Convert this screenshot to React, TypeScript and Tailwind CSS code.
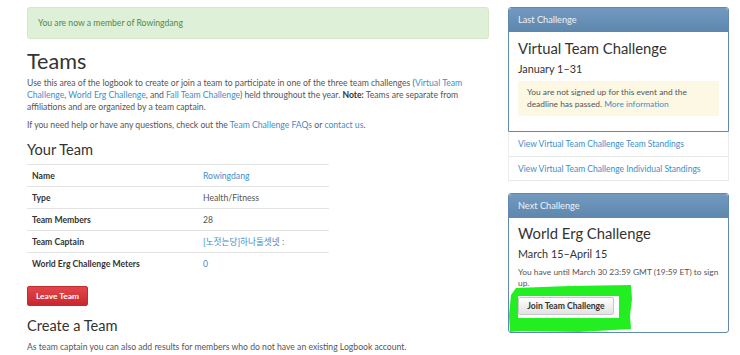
import React from 'react';

const font = { fontFamily: 'Lato, "Noto Sans CJK KR", sans-serif' };

function TeamRow({ label, children }: { label: string; children: React.ReactNode }) {
  return (
    <tr className="border-t border-[#e3e3e3]">
      <td className="h-[22px] w-[176px] pl-[5px] font-bold text-[#333]">{label}</td>
      <td className="h-[22px] pl-0">{children}</td>
    </tr>
  );
}

function PanelHeader({ title }: { title: string }) {
  return (
    <div className="h-[24px] flex items-center px-[9px] text-[9.2px] text-[#eef3f8] bg-gradient-to-b from-[#7399bf] to-[#5e87ae] rounded-t-[3px]">
      {title}
    </div>
  );
}

export default function App() {
  return (
    <div style={font} className="w-[740px] h-[355px] overflow-hidden bg-white text-[8.4px] leading-[12px] text-[#555]">
      <div className="flex pl-[27px] pt-[7px] gap-[19px]">
        {/* main column */}
        <div className="w-[462px] text-[8.65px]">
          <div className="h-[32px] flex items-center px-[10px] bg-[#dff0d8] border border-[#d3e8c6] rounded-[3px] text-[#4f8a4a]">
            You are now a member of Rowingdang
          </div>

          <h1 className="mt-[10px] text-[21.6px] leading-[24px] text-[#333] font-normal">Teams</h1>
          <p className="mt-[4px]">
            Use this area of the logbook to create or join a team to participate in one of the three team challenges (
            <a className="text-[#3d8ec9]">Virtual Team</a> <a className="text-[#3d8ec9]">Challenge</a>,{' '}
            <a className="text-[#3d8ec9]">World Erg Challenge</a>, and <a className="text-[#3d8ec9]">Fall Team Challenge</a>) held
            throughout the year. <b className="text-[#333]">Note:</b> Teams are separate from
            <br />
            affiliations and are organized by a team captain.
          </p>
          <p className="mt-[6px]">
            If you need help or have any questions, check out the <a className="text-[#3d8ec9]">Team Challenge FAQs</a> or{' '}
            <a className="text-[#3d8ec9]">contact us</a>.
          </p>

          <h3 className="mt-[11px] text-[14.6px] leading-[16px] text-[#333] font-normal">Your Team</h3>
          <table className="mt-[6px] w-[302px] border-collapse">
            <tbody>
              <TeamRow label="Name">
                <a className="text-[#3d8ec9]">Rowingdang</a>
              </TeamRow>
              <TeamRow label="Type">Health/Fitness</TeamRow>
              <TeamRow label="Team Members">28</TeamRow>
              <TeamRow label="Team Captain">
                <a className="text-[#3d8ec9]">[노젓는당]하나둘셋넷 :</a>
              </TeamRow>
              <TeamRow label="World Erg Challenge Meters">
                <a className="text-[#3d8ec9]">0</a>
              </TeamRow>
            </tbody>
          </table>

          <button className="mt-[11px] block h-[20px] w-[61px] rounded-[2px] border border-[#c42c2c] bg-gradient-to-b from-[#e2464c] to-[#c9262d] text-[8.4px] font-bold text-white">
            Leave Team
          </button>

          <h3 className="mt-[12px] text-[14.6px] leading-[16px] text-[#333] font-normal">Create a Team</h3>
          <p className="mt-[7px]">As team captain you can also add results for members who do not have an existing Logbook account.</p>
        </div>

        {/* sidebar */}
        <div className="w-[221px]">
          <div className="border border-[#6189b0] rounded-t-[3px]">
            <PanelHeader title="Last Challenge" />
            <div className="px-[9px] pt-[8px] pb-[9px]">
              <h3 className="text-[14.8px] leading-[16px] text-[#333]">Virtual Team Challenge</h3>
              <h4 className="mt-[7px] text-[10.8px] leading-[12px] text-[#333]">January 1–31</h4>
              <div className="mt-[6px] mb-[6px] px-[9px] py-[6px] bg-[#fcf8e3] text-[#555] leading-[11.5px]">
                You are not signed up for this event and the deadline has passed.{' '}
                <a className="text-[#3d8ec9]">More information</a>
              </div>
            </div>
          </div>
          <div className="border-x border-[#ececec] text-[8.5px]">
            <div className="h-[25px] flex items-center px-[9px] border-b border-[#e6e6e6] text-[#3d8ec9]">
              View Virtual Team Challenge Team Standings
            </div>
            <div className="h-[24px] flex items-center px-[9px] border-b border-[#e6e6e6] text-[#3d8ec9]">
              View Virtual Team Challenge Individual Standings
            </div>
          </div>

          <div className="mt-[12px] border border-[#6189b0] rounded-[3px]">
            <PanelHeader title="Next Challenge" />
            <div className="px-[9px] pt-[7px] pb-[9px]">
              <h3 className="text-[14.8px] leading-[16px] text-[#333]">World Erg Challenge</h3>
              <h4 className="mt-[7px] text-[10.8px] leading-[12px] text-[#333]">March 15–April 15</h4>
              <p className="mt-[7px] leading-[11px]">You have until March 30 23:59 GMT (19:59 ET) to sign up.</p>
              <div className="relative mt-[8px] mb-[8px] w-[96px]">
                <svg className="absolute left-[-9px] top-[-12px]" width="124" height="48" viewBox="0 0 124 48">
                  <path
                    fillRule="evenodd"
                    fill="#22ee22"
                    d="M7 3 L60 1 L122 0 L123 14 L121 30 L122 44 L70 47 L12 46 L1 47 L0 30 L2 10 Z M9 11 L110 11 L110 33 L9 33 Z"
                  />
                </svg>
                <button className="relative h-[18px] w-[96px] rounded-[2px] border border-[#c8c8c8] bg-gradient-to-b from-white to-[#e2e2e2] text-[8.6px] font-bold text-[#333]">
                  Join Team Challenge
                </button>
              </div>
            </div>
          </div>
        </div>
      </div>
    </div>
  );
}
